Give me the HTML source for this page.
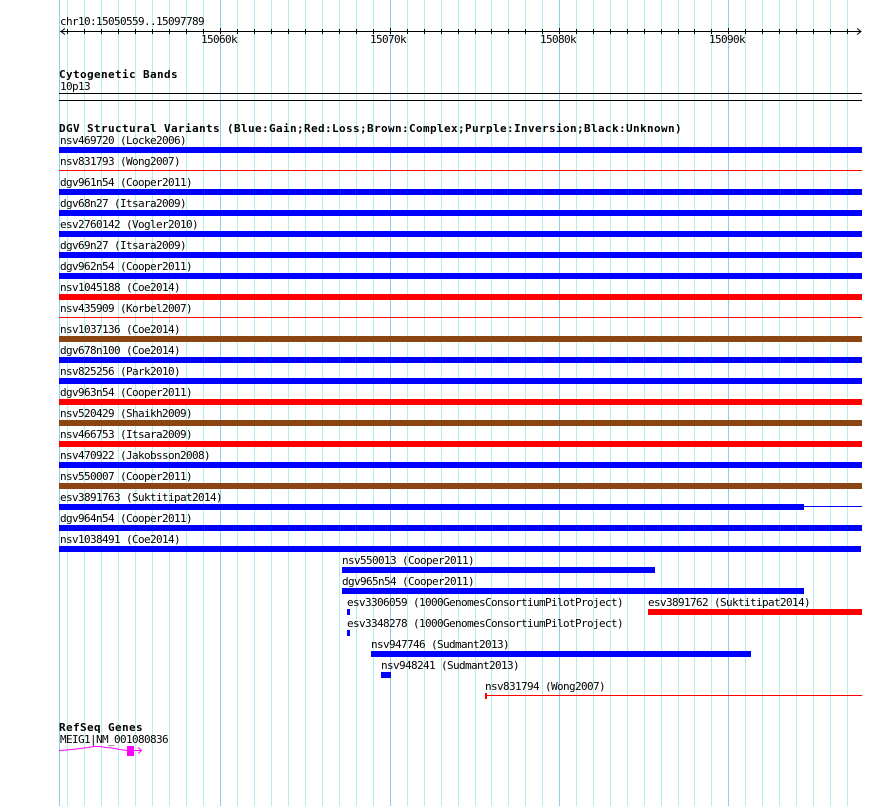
<!DOCTYPE html>
<html><head><meta charset="utf-8"><title>GBrowse</title>
<style>
html,body{margin:0;padding:0;background:#fff;width:890px;height:806px;overflow:hidden}
svg{display:block;position:absolute;left:0;top:0}
text{font-family:"DejaVu Sans Mono","Liberation Mono",monospace;font-size:11px;letter-spacing:-0.622px;fill:#000}
text.b{font-weight:bold;font-size:11px;letter-spacing:0.378px}
</style></head><body>
<svg width="890" height="806" viewBox="0 0 890 806" shape-rendering="crispEdges">
<rect width="890" height="806" fill="#fff"/>
<g fill="#b0eef0">
<rect x="67" y="0" width="1" height="806"/><rect x="84" y="0" width="1" height="806"/><rect x="101" y="0" width="1" height="806"/><rect x="118" y="0" width="1" height="806"/><rect x="135" y="0" width="1" height="806"/><rect x="152" y="0" width="1" height="806"/><rect x="169" y="0" width="1" height="806"/><rect x="186" y="0" width="1" height="806"/><rect x="203" y="0" width="1" height="806"/>
<rect x="237" y="0" width="1" height="806"/><rect x="254" y="0" width="1" height="806"/><rect x="271" y="0" width="1" height="806"/><rect x="288" y="0" width="1" height="806"/><rect x="305" y="0" width="1" height="806"/><rect x="322" y="0" width="1" height="806"/><rect x="339" y="0" width="1" height="806"/><rect x="356" y="0" width="1" height="806"/><rect x="373" y="0" width="1" height="806"/>
<rect x="407" y="0" width="1" height="806"/><rect x="424" y="0" width="1" height="806"/><rect x="441" y="0" width="1" height="806"/><rect x="458" y="0" width="1" height="806"/><rect x="475" y="0" width="1" height="806"/><rect x="491" y="0" width="1" height="806"/><rect x="508" y="0" width="1" height="806"/><rect x="525" y="0" width="1" height="806"/><rect x="542" y="0" width="1" height="806"/>
<rect x="576" y="0" width="1" height="806"/><rect x="593" y="0" width="1" height="806"/><rect x="610" y="0" width="1" height="806"/><rect x="627" y="0" width="1" height="806"/><rect x="644" y="0" width="1" height="806"/><rect x="661" y="0" width="1" height="806"/><rect x="678" y="0" width="1" height="806"/><rect x="694" y="0" width="1" height="806"/><rect x="711" y="0" width="1" height="806"/>
<rect x="745" y="0" width="1" height="806"/><rect x="762" y="0" width="1" height="806"/><rect x="779" y="0" width="1" height="806"/><rect x="796" y="0" width="1" height="806"/><rect x="813" y="0" width="1" height="806"/><rect x="830" y="0" width="1" height="806"/><rect x="847" y="0" width="1" height="806"/>
</g>
<g fill="#88d0f0">
<rect x="59" y="0" width="1" height="806"/><rect x="220" y="0" width="1" height="806"/><rect x="390" y="0" width="1" height="806"/><rect x="559" y="0" width="1" height="806"/><rect x="728" y="0" width="1" height="806"/>
</g>

<!-- ruler -->
<g fill="#000">
<rect x="60" y="31" width="801" height="1"/>
<rect x="67" y="29" width="1" height="5"/><rect x="84" y="29" width="1" height="5"/><rect x="101" y="29" width="1" height="5"/><rect x="118" y="29" width="1" height="5"/><rect x="135" y="29" width="1" height="5"/><rect x="152" y="29" width="1" height="5"/><rect x="169" y="29" width="1" height="5"/><rect x="186" y="29" width="1" height="5"/><rect x="203" y="29" width="1" height="5"/><rect x="220" y="28" width="1" height="6"/>
<rect x="237" y="29" width="1" height="5"/><rect x="254" y="29" width="1" height="5"/><rect x="271" y="29" width="1" height="5"/><rect x="288" y="29" width="1" height="5"/><rect x="305" y="29" width="1" height="5"/><rect x="322" y="29" width="1" height="5"/><rect x="339" y="29" width="1" height="5"/><rect x="356" y="29" width="1" height="5"/><rect x="373" y="29" width="1" height="5"/><rect x="390" y="28" width="1" height="6"/>
<rect x="407" y="29" width="1" height="5"/><rect x="424" y="29" width="1" height="5"/><rect x="441" y="29" width="1" height="5"/><rect x="458" y="29" width="1" height="5"/><rect x="475" y="29" width="1" height="5"/><rect x="491" y="29" width="1" height="5"/><rect x="508" y="29" width="1" height="5"/><rect x="525" y="29" width="1" height="5"/><rect x="542" y="29" width="1" height="5"/><rect x="559" y="28" width="1" height="6"/>
<rect x="576" y="29" width="1" height="5"/><rect x="593" y="29" width="1" height="5"/><rect x="610" y="29" width="1" height="5"/><rect x="627" y="29" width="1" height="5"/><rect x="644" y="29" width="1" height="5"/><rect x="661" y="29" width="1" height="5"/><rect x="678" y="29" width="1" height="5"/><rect x="694" y="29" width="1" height="5"/><rect x="711" y="29" width="1" height="5"/><rect x="728" y="28" width="1" height="6"/>
<rect x="745" y="29" width="1" height="5"/><rect x="762" y="29" width="1" height="5"/><rect x="779" y="29" width="1" height="5"/><rect x="796" y="29" width="1" height="5"/><rect x="813" y="29" width="1" height="5"/><rect x="830" y="29" width="1" height="5"/><rect x="847" y="29" width="1" height="5"/>
<rect x="59" y="93" width="803" height="1"/>
<rect x="59" y="100" width="803" height="1"/>
</g>
<path d="M65 28.5L61 31.5L65 34.5M857 28.5L861 31.5L857 34.5" fill="none" stroke="#000" shape-rendering="auto"/>
<text x="60" y="25">chr10:15050559..15097789</text>
<text x="201" y="43">15060k</text>
<text x="370" y="43">15070k</text>
<text x="540" y="43">15080k</text>
<text x="709" y="43">15090k</text>
<text class="b" x="59" y="78">Cytogenetic Bands</text>
<text x="60" y="90">10p13</text>
<text class="b" x="59" y="132">DGV Structural Variants (Blue:Gain;Red:Loss;Brown:Complex;Purple:Inversion;Black:Unknown)</text>

<!-- bars -->
<rect x="59" y="147" width="803" height="6" fill="#0000ff"/>
<rect x="59" y="170" width="803" height="1" fill="#ff0000"/>
<rect x="59" y="189" width="803" height="6" fill="#0000ff"/>
<rect x="59" y="210" width="803" height="6" fill="#0000ff"/>
<rect x="59" y="231" width="803" height="6" fill="#0000ff"/>
<rect x="59" y="252" width="803" height="6" fill="#0000ff"/>
<rect x="59" y="273" width="803" height="6" fill="#0000ff"/>
<rect x="59" y="294" width="803" height="6" fill="#ff0000"/>
<rect x="59" y="317" width="803" height="1" fill="#ff0000"/>
<rect x="59" y="336" width="803" height="6" fill="#8b4513"/>
<rect x="59" y="357" width="803" height="6" fill="#0000ff"/>
<rect x="59" y="378" width="803" height="6" fill="#0000ff"/>
<rect x="59" y="399" width="803" height="6" fill="#ff0000"/>
<rect x="59" y="420" width="803" height="6" fill="#8b4513"/>
<rect x="59" y="441" width="803" height="6" fill="#ff0000"/>
<rect x="59" y="462" width="803" height="6" fill="#0000ff"/>
<rect x="59" y="483" width="803" height="6" fill="#8b4513"/>
<rect x="59" y="504" width="745" height="6" fill="#0000ff"/>
<rect x="804" y="506" width="58" height="1" fill="#0000ff"/>
<rect x="59" y="525" width="803" height="6" fill="#0000ff"/>
<rect x="59" y="546" width="802" height="6" fill="#0000ff"/>
<rect x="342" y="567" width="313" height="6" fill="#0000ff"/>
<rect x="342" y="588" width="462" height="6" fill="#0000ff"/>
<rect x="347" y="609" width="3" height="6" fill="#0000ff"/>
<rect x="648" y="609" width="214" height="6" fill="#ff0000"/>
<rect x="347" y="630" width="3" height="6" fill="#0000ff"/>
<rect x="371" y="651" width="380" height="6" fill="#0000ff"/>
<rect x="381" y="672" width="10" height="6" fill="#0000ff"/>
<rect x="485" y="695" width="377" height="1" fill="#ff0000"/>
<rect x="485" y="693" width="2" height="6" fill="#ff0000"/>

<!-- labels -->
<text x="60" y="144">nsv469720 (Locke2006)</text>
<text x="60" y="165">nsv831793 (Wong2007)</text>
<text x="60" y="186">dgv961n54 (Cooper2011)</text>
<text x="60" y="207">dgv68n27 (Itsara2009)</text>
<text x="60" y="228">esv2760142 (Vogler2010)</text>
<text x="60" y="249">dgv69n27 (Itsara2009)</text>
<text x="60" y="270">dgv962n54 (Cooper2011)</text>
<text x="60" y="291">nsv1045188 (Coe2014)</text>
<text x="60" y="312">nsv435909 (Korbel2007)</text>
<text x="60" y="333">nsv1037136 (Coe2014)</text>
<text x="60" y="354">dgv678n100 (Coe2014)</text>
<text x="60" y="375">nsv825256 (Park2010)</text>
<text x="60" y="396">dgv963n54 (Cooper2011)</text>
<text x="60" y="417">nsv520429 (Shaikh2009)</text>
<text x="60" y="438">nsv466753 (Itsara2009)</text>
<text x="60" y="459">nsv470922 (Jakobsson2008)</text>
<text x="60" y="480">nsv550007 (Cooper2011)</text>
<text x="60" y="501">esv3891763 (Suktitipat2014)</text>
<text x="60" y="522">dgv964n54 (Cooper2011)</text>
<text x="60" y="543">nsv1038491 (Coe2014)</text>
<text x="342" y="564">nsv550013 (Cooper2011)</text>
<text x="342" y="585">dgv965n54 (Cooper2011)</text>
<text x="347" y="606">esv3306059 (1000GenomesConsortiumPilotProject)</text>
<text x="648" y="606">esv3891762 (Suktitipat2014)</text>
<text x="347" y="627">esv3348278 (1000GenomesConsortiumPilotProject)</text>
<text x="371" y="648">nsv947746 (Sudmant2013)</text>
<text x="381" y="669">nsv948241 (Sudmant2013)</text>
<text x="485" y="690">nsv831794 (Wong2007)</text>

<!-- RefSeq -->
<text class="b" x="59" y="731">RefSeq Genes</text>
<text x="60" y="743">MEIG1|NM_001080836</text>
<path d="M59 750.5L72 749.5L80 748.5L88 747.5L94 746.5L100 746.5L106 747.5L112 748L120 749.5L127 750.5" fill="none" stroke="#ff00ff" shape-rendering="auto"/>
<rect x="127" y="746" width="7" height="10" fill="#ff00ff"/>
<rect x="134" y="750" width="7" height="1" fill="#ff00ff"/>
<path d="M138 747.5L141.5 750.5L138 753.5" fill="none" stroke="#ff00ff" shape-rendering="auto"/>
</svg>
</body></html>
